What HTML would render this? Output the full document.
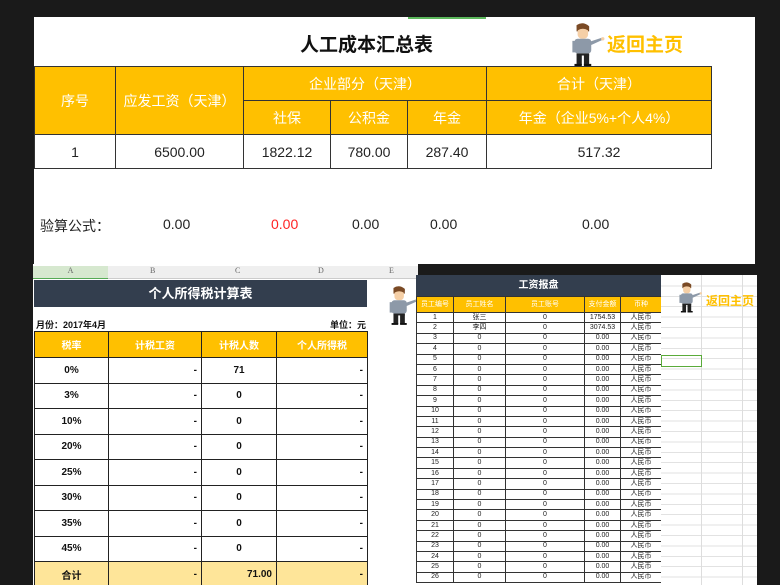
<!DOCTYPE html>
<html><head><meta charset="utf-8"><style>
*{margin:0;padding:0;box-sizing:border-box}
html,body{width:780px;height:585px;overflow:hidden}
body{background:#1a1a1a;position:relative;font-family:"Liberation Sans","Noto Sans CJK SC",sans-serif}
.a{position:absolute}
table{border-collapse:collapse;position:absolute;table-layout:fixed}
td{text-align:center;padding:0;overflow:hidden;white-space:nowrap}
.t1 td{border:1.5px solid #333;font-size:14px}
.y{background:#ffc000;color:#fff}
.t2 td{border:1.5px solid #222;font-size:10px;font-weight:bold;color:#111}
.t3 td{border:1px solid #333;font-size:7px;color:#222;height:10.4px;line-height:8px}
</style></head><body>
<svg width="0" height="0" style="position:absolute"><defs>
<g id="man">
<path d="M10 3 Q16 -1 22 4 L22 9 L10 9Z" fill="#7a4a25"/>
<rect x="11" y="5" width="10" height="11" rx="4" fill="#f5cfa6"/>
<path d="M10 4 Q16 0 22 5 L21 8 Q16 5 11 8Z" fill="#7a4a25"/>
<rect x="8" y="16" width="16" height="14" rx="3" fill="#8d99a8"/>
<path d="M22 19 L34 15 L35 17 L24 22Z" fill="#8d99a8"/>
<circle cx="35" cy="16" r="1.6" fill="#f5cfa6"/>
<rect x="6" y="18" width="3" height="11" fill="#8d99a8"/>
<rect x="10" y="30" width="12" height="2" fill="#222"/>
<rect x="10" y="31" width="5" height="10" fill="#222"/>
<rect x="17" y="31" width="5" height="10" fill="#222"/>
<rect x="8" y="40" width="7" height="2" fill="#111"/>
<rect x="17" y="40" width="7" height="2" fill="#111"/>
</g></defs></svg>

<!-- top sheet -->
<div class="a" style="left:34px;top:17px;width:721px;height:247px;background:#fff"></div>
<div class="a" style="left:408px;top:17px;width:78px;height:2px;background:#5cb85c"></div>
<div class="a" style="left:300px;top:30px;font-size:19px;font-weight:bold;color:#111">人工成本汇总表</div>
<svg class="a" style="left:565px;top:22px" width="42" height="44" viewBox="0 0 38 42"><use href="#man"/></svg>
<div class="a" style="left:607px;top:30px;font-size:19px;font-weight:bold;color:#ffc000">返回主页</div>
<table class="t1" style="left:34px;top:66px;width:677px">
<colgroup><col style="width:81px"><col style="width:128px"><col style="width:87px"><col style="width:77px"><col style="width:79px"><col style="width:225px"></colgroup>
<tr style="height:34px"><td class="y" rowspan="2">序号</td><td class="y" rowspan="2">应发工资（天津）</td><td class="y" colspan="3">企业部分（天津）</td><td class="y">合计（天津）</td></tr>
<tr style="height:34px"><td class="y">社保</td><td class="y">公积金</td><td class="y">年金</td><td class="y">年金（企业5%+个人4%）</td></tr>
<tr style="height:34px;color:#222"><td>1</td><td>6500.00</td><td>1822.12</td><td>780.00</td><td>287.40</td><td>517.32</td></tr>
</table>
<div class="a" style="left:40px;top:216px;font-size:14px;color:#222">验算公式：</div>
<div class="a" style="left:163px;top:216px;font-size:14px;color:#222">0.00</div>
<div class="a" style="left:271px;top:216px;font-size:14px;color:#f22">0.00</div>
<div class="a" style="left:352px;top:216px;font-size:14px;color:#222">0.00</div>
<div class="a" style="left:430px;top:216px;font-size:14px;color:#222">0.00</div>
<div class="a" style="left:582px;top:216px;font-size:14px;color:#222">0.00</div>

<!-- left sheet -->
<div class="a" style="left:33px;top:264px;width:385px;height:321px;background:#fff"></div>
<div class="a" style="left:33px;top:266px;width:385px;height:13px;background:#efefef;border-bottom:1px solid #ccc;font-size:8px;color:#666;font-family:'Liberation Serif',serif">
<span class="a" style="left:0;width:75px;height:13px;background:#d6e8cf;border-bottom:1px solid #5a5;text-align:center">A</span>
<span class="a" style="left:117px;">B</span><span class="a" style="left:202px">C</span><span class="a" style="left:285px">D</span><span class="a" style="left:356px">E</span></div>
<div class="a" style="left:34px;top:280px;width:333px;height:27px;background:#333e4e;color:#fff;font-size:13px;font-weight:bold;text-align:center;line-height:27px">个人所得税计算表</div>
<svg class="a" style="left:384px;top:284px" width="36" height="42" viewBox="0 0 38 42"><use href="#man"/></svg>
<div class="a" style="left:36px;top:318px;font-size:9px;font-weight:bold;color:#111">月份：2017年4月</div>
<div class="a" style="left:330px;top:318px;font-size:9px;font-weight:bold;color:#111">单位：元</div>
<table class="t2" style="left:34px;top:331px;width:333px">
<colgroup><col style="width:74px"><col style="width:93px"><col style="width:75px"><col style="width:91px"></colgroup>
<tr style="height:26px"><td class="y" style="color:#fff">税率</td><td class="y" style="color:#fff">计税工资</td><td class="y" style="color:#fff">计税人数</td><td class="y" style="color:#fff">个人所得税</td></tr>
<tr style="height:25.5px"><td>0%</td><td style="text-align:right;padding-right:4px">-</td><td>71</td><td style="text-align:right;padding-right:4px">-</td></tr>
<tr style="height:25.5px"><td>3%</td><td style="text-align:right;padding-right:4px">-</td><td>0</td><td style="text-align:right;padding-right:4px">-</td></tr>
<tr style="height:25.5px"><td>10%</td><td style="text-align:right;padding-right:4px">-</td><td>0</td><td style="text-align:right;padding-right:4px">-</td></tr>
<tr style="height:25.5px"><td>20%</td><td style="text-align:right;padding-right:4px">-</td><td>0</td><td style="text-align:right;padding-right:4px">-</td></tr>
<tr style="height:25.5px"><td>25%</td><td style="text-align:right;padding-right:4px">-</td><td>0</td><td style="text-align:right;padding-right:4px">-</td></tr>
<tr style="height:25.5px"><td>30%</td><td style="text-align:right;padding-right:4px">-</td><td>0</td><td style="text-align:right;padding-right:4px">-</td></tr>
<tr style="height:25.5px"><td>35%</td><td style="text-align:right;padding-right:4px">-</td><td>0</td><td style="text-align:right;padding-right:4px">-</td></tr>
<tr style="height:25.5px"><td>45%</td><td style="text-align:right;padding-right:4px">-</td><td>0</td><td style="text-align:right;padding-right:4px">-</td></tr>
<tr style="height:26px;background:#fee599"><td>合计</td><td style="text-align:right;padding-right:4px">-</td><td style="text-align:right;padding-right:4px">71.00</td><td style="text-align:right;padding-right:4px">-</td></tr>
</table>

<!-- right sheet -->
<div class="a" style="left:416px;top:275px;width:245px;height:310px;background:#fff"></div>
<div class="a" style="left:416px;top:275px;width:245px;height:21px;background:#333e4e;color:#fff;font-size:10px;font-weight:bold;text-align:center;line-height:21px">工资报盘</div>
<table class="t3" style="left:416px;top:296px;width:245px">
<colgroup><col style="width:37px"><col style="width:52px"><col style="width:79px"><col style="width:36px"><col style="width:41px"></colgroup>
<tr style="height:16px"><td class="y" style="color:#fff">员工编号</td><td class="y" style="color:#fff">员工姓名</td><td class="y" style="color:#fff">员工账号</td><td class="y" style="color:#fff">支付金额</td><td class="y" style="color:#fff">币种</td></tr>
<tr><td>1</td><td>张三</td><td>0</td><td>1754.53</td><td>人民币</td></tr>
<tr><td>2</td><td>李四</td><td>0</td><td>3074.53</td><td>人民币</td></tr>
<tr><td>3</td><td>0</td><td>0</td><td>0.00</td><td>人民币</td></tr>
<tr><td>4</td><td>0</td><td>0</td><td>0.00</td><td>人民币</td></tr>
<tr><td>5</td><td>0</td><td>0</td><td>0.00</td><td>人民币</td></tr>
<tr><td>6</td><td>0</td><td>0</td><td>0.00</td><td>人民币</td></tr>
<tr><td>7</td><td>0</td><td>0</td><td>0.00</td><td>人民币</td></tr>
<tr><td>8</td><td>0</td><td>0</td><td>0.00</td><td>人民币</td></tr>
<tr><td>9</td><td>0</td><td>0</td><td>0.00</td><td>人民币</td></tr>
<tr><td>10</td><td>0</td><td>0</td><td>0.00</td><td>人民币</td></tr>
<tr><td>11</td><td>0</td><td>0</td><td>0.00</td><td>人民币</td></tr>
<tr><td>12</td><td>0</td><td>0</td><td>0.00</td><td>人民币</td></tr>
<tr><td>13</td><td>0</td><td>0</td><td>0.00</td><td>人民币</td></tr>
<tr><td>14</td><td>0</td><td>0</td><td>0.00</td><td>人民币</td></tr>
<tr><td>15</td><td>0</td><td>0</td><td>0.00</td><td>人民币</td></tr>
<tr><td>16</td><td>0</td><td>0</td><td>0.00</td><td>人民币</td></tr>
<tr><td>17</td><td>0</td><td>0</td><td>0.00</td><td>人民币</td></tr>
<tr><td>18</td><td>0</td><td>0</td><td>0.00</td><td>人民币</td></tr>
<tr><td>19</td><td>0</td><td>0</td><td>0.00</td><td>人民币</td></tr>
<tr><td>20</td><td>0</td><td>0</td><td>0.00</td><td>人民币</td></tr>
<tr><td>21</td><td>0</td><td>0</td><td>0.00</td><td>人民币</td></tr>
<tr><td>22</td><td>0</td><td>0</td><td>0.00</td><td>人民币</td></tr>
<tr><td>23</td><td>0</td><td>0</td><td>0.00</td><td>人民币</td></tr>
<tr><td>24</td><td>0</td><td>0</td><td>0.00</td><td>人民币</td></tr>
<tr><td>25</td><td>0</td><td>0</td><td>0.00</td><td>人民币</td></tr>
<tr><td>26</td><td>0</td><td>0</td><td>0.00</td><td>人民币</td></tr>
</table>
<div class="a" style="left:661px;top:275px;width:96px;height:310px;background:#fff;
background-image:linear-gradient(90deg,transparent 40px,#ddd 40px,#ddd 41px,transparent 41px,transparent 81px,#ddd 81px,#ddd 82px,transparent 82px),repeating-linear-gradient(180deg,transparent 0,transparent 9.4px,#e2e2e2 9.4px,#e2e2e2 10.4px);background-position:0 0,0 1px"></div>
<div class="a" style="left:661px;top:355px;width:41px;height:12px;border:1.5px solid #5aab3a"></div>
<svg class="a" style="left:675px;top:281px" width="28" height="32" viewBox="0 0 38 42"><use href="#man"/></svg>
<div class="a" style="left:706px;top:292px;font-size:12px;font-weight:bold;color:#ffc000">返回主页</div>
</body></html>
